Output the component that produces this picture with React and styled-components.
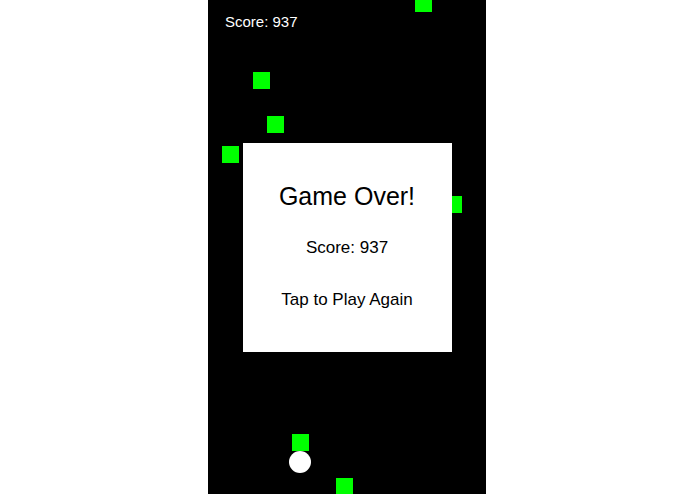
import React from 'react'
import styled, { createGlobalStyle } from 'styled-components'

const GlobalStyle = createGlobalStyle`
  html, body {
    margin: 0;
    padding: 0;
    background: #ffffff;
    font-family: 'Liberation Sans', Arial, sans-serif;
  }
`

const Page = styled.div`
  display: flex;
  justify-content: center;
  box-sizing: border-box;
  width: 100%;
  height: 494px;
  padding-right: 1px;
`

const Board = styled.div`
  position: relative;
  width: 278px;
  height: 494px;
  background: #000000;
  overflow: hidden;
`

const ScoreLabel = styled.div`
  padding: 13px 0 0 17px;
  font-size: 15px;
  line-height: 18px;
  color: #ffffff;
`

const Block = styled.div`
  position: absolute;
  width: 17px;
  height: 17px;
  background: #00ff00;
`

const Ball = styled.div`
  position: absolute;
  left: 81px;
  top: 451px;
  width: 22px;
  height: 22px;
  border-radius: 50%;
  background: #ffffff;
`

const Overlay = styled.div`
  position: absolute;
  inset: 0;
  display: flex;
  align-items: center;
  justify-content: center;
  z-index: 2;
`

const Dialog = styled.div`
  width: 209px;
  height: 209px;
  background: #ffffff;
  display: flex;
  flex-direction: column;
  align-items: center;
  color: #000000;
`

const Title = styled.div`
  margin-top: 39px;
  font-size: 25px;
  line-height: 29px;
`

const Line = styled.div`
  margin-top: ${({ $gap }) => $gap}px;
  font-size: 17px;
  line-height: 20px;
`

const blocks = [
  { x: 207, y: -5 },
  { x: 45, y: 72 },
  { x: 59, y: 116 },
  { x: 14, y: 146 },
  { x: 237, y: 196 },
  { x: 84, y: 434 },
  { x: 128, y: 478 },
]

export default function App() {
  const score = 937

  return (
    <>
      <GlobalStyle />
      <Page>
        <Board>
          <ScoreLabel>Score: {score}</ScoreLabel>
          {blocks.map((b, i) => (
            <Block key={i} style={{ left: b.x, top: b.y }} />
          ))}
          <Ball />
          <Overlay>
            <Dialog>
              <Title>Game Over!</Title>
              <Line $gap={27}>Score: {score}</Line>
              <Line $gap={32}>Tap to Play Again</Line>
            </Dialog>
          </Overlay>
        </Board>
      </Page>
    </>
  )
}
